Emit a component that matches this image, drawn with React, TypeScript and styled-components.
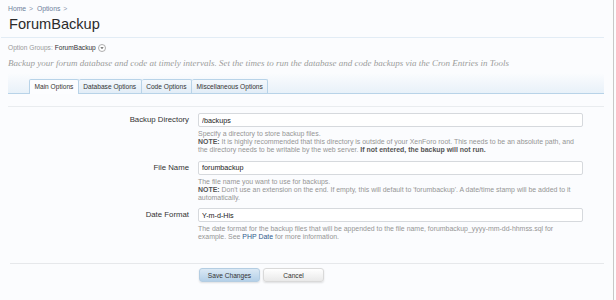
import styled, { createGlobalStyle } from "styled-components";

const GlobalStyle = createGlobalStyle`
  html, body {
    margin: 0;
    padding: 0;
    background: #fbfcfe;
  }
  body {
    font-family: "Liberation Sans", Arial, sans-serif;
    color: #333;
  }
`;

interface TabData {
  label: string;
  active?: boolean;
}

const tabs: TabData[] = [
  { label: "Main Options", active: true },
  { label: "Database Options" },
  { label: "Code Options" },
  { label: "Miscellaneous Options" },
];

function App() {
  return (
    <Page>
      <GlobalStyle />
      <Content>
        <Breadcrumb>
          <a>Home</a> <span>&gt;</span> <a>Options</a> <span>&gt;</span>
        </Breadcrumb>
        <Title>ForumBackup</Title>
        <GroupLine>
          Option Groups: <strong>ForumBackup</strong>
          <Chooser>
            <svg width="8" height="8" viewBox="0 0 8 8">
              <circle cx="4" cy="4" r="3.5" fill="#fff" stroke="#9a9a9a" strokeWidth="0.8" />
              <path d="M2.3 3.2 L5.7 3.2 L4 5.1 Z" fill="#555" />
            </svg>
          </Chooser>
        </GroupLine>
        <Description>
          Backup your forum database and code at timely intervals. Set the times to run the
          database and code backups via the Cron Entries in Tools
        </Description>
        <TabBar>
          {tabs.map((t) => (
            <Tab key={t.label} $active={t.active}>
              {t.label}
            </Tab>
          ))}
        </TabBar>

        <Form>
          <Row>
            <Label>Backup Directory</Label>
            <Field>
              <Input defaultValue="/backups" />
              <Explain>
                Specify a directory to store backup files.
                <br />
                <b>NOTE:</b> It is highly recommended that this directory is outside of your
                XenForo root. This needs to be an absolute path, and the directory needs to be
                writable by the web server. <b>If not entered, the backup will not run.</b>
              </Explain>
            </Field>
          </Row>
          <Row>
            <Label>File Name</Label>
            <Field>
              <Input defaultValue="forumbackup" />
              <Explain>
                The file name you want to use for backups.
                <br />
                <b>NOTE:</b> Don't use an extension on the end. If empty, this will default to
                'forumbackup'. A date/time stamp will be added to it automatically.
              </Explain>
            </Field>
          </Row>
          <Row>
            <Label>Date Format</Label>
            <Field>
              <Input defaultValue="Y-m-d-His" />
              <Explain>
                The date format for the backup files that will be appended to the file name,
                forumbackup_yyyy-mm-dd-hhmss.sql for example. See <PhpLink>PHP Date</PhpLink>{" "}
                for more information.
              </Explain>
            </Field>
          </Row>
        </Form>

        <SubmitUnit>
          <Button $primary>Save Changes</Button>
          <Button>Cancel</Button>
        </SubmitUnit>
      </Content>
      <Edge />
    </Page>
  );
}

const Page = styled.div`
  display: flex;
  width: 616px;
  height: 300px;
  overflow: hidden;
`;

const Content = styled.div`
  width: 604px;
  padding-left: 8px;
  box-sizing: border-box;
`;

const Edge = styled.div`
  width: 1px;
  margin-left: 9px;
  background: #c8c8c8;
`;

const Breadcrumb = styled.div`
  font-size: 6.8px;
  line-height: 8px;
  padding-top: 5px;
  color: #6d7f9c;
  a {
    color: #6d7f9c;
  }
  span {
    margin: 0 2px 0 1px;
    color: #8a97ad;
  }
`;

const Title = styled.h1`
  margin: 1px 0 0;
  font-size: 14.6px;
  line-height: 20px;
  font-weight: normal;
  color: #2b2b2b;
  padding-bottom: 3px;
  margin-left: -7px;
  padding-left: 8px;
  border-bottom: 1px solid #e2ecf5;
`;

const GroupLine = styled.div`
  display: flex;
  align-items: center;
  margin-top: 6px;
  font-size: 6.6px;
  line-height: 8px;
  color: #9a9a9a;
  strong {
    font-weight: normal;
    color: #333;
    margin-left: 2px;
  }
`;

const Chooser = styled.span`
  display: inline-flex;
  margin-left: 2px;
`;

const Description = styled.div`
  margin-top: 6px;
  font-family: "Liberation Serif", "Times New Roman", serif;
  font-style: italic;
  font-size: 9px;
  line-height: 10px;
  color: #9c9c9c;
  white-space: nowrap;
`;

const TabBar = styled.div`
  display: flex;
  align-items: flex-end;
  margin-top: 5px;
  padding-left: 21px;
  height: 21px;
  box-sizing: border-box;
  border-bottom: 1px solid #b8d3e8;
  background: linear-gradient(to bottom, rgba(235, 243, 250, 0), #e8f1f9);
`;

const Tab = styled.div<{ $active?: boolean }>`
  padding: 0 4.5px;
  box-sizing: border-box;
  font-size: 6.6px;
  line-height: 14px;
  color: #333;
  border: 1px solid #b8d3e8;
  border-left-width: ${(p) => (p.$active ? "1px" : "0")};
  border-bottom: none;
  border-radius: 2px 2px 0 0;
  margin-bottom: ${(p) => (p.$active ? "-1px" : "0")};
  height: ${(p) => (p.$active ? "15px" : "14px")};
  background: ${(p) =>
    p.$active ? "#fcfdff" : "linear-gradient(to bottom, #f4f8fc, #e2edf7)"};
  &:first-child {
    border-left-width: 1px;
  }
`;

const Form = styled.div`
  margin-top: 12px;
  border-top: 1px solid #e9ecef;
  padding-top: 6px;
`;

const Row = styled.div`
  display: grid;
  grid-template-columns: 181px 385px;
  column-gap: 9px;
  margin-bottom: 6px;
`;

const Label = styled.div`
  text-align: right;
  font-size: 7.8px;
  line-height: 14px;
  color: #333;
`;

const Field = styled.div`
  display: flex;
  flex-direction: column;
`;

const Input = styled.input`
  height: 14px;
  box-sizing: border-box;
  padding: 0 3px;
  border: 1px solid #d6d9dd;
  border-radius: 2px;
  background: #fff;
  font-family: "Liberation Sans", Arial, sans-serif;
  font-size: 7.2px;
  color: #222;
  outline: none;
`;

const Explain = styled.div`
  margin-top: 3px;
  font-size: 6.95px;
  line-height: 8.2px;
  color: #959595;
  padding-right: 3px;
  b {
    color: #555;
  }
`;

const PhpLink = styled.a`
  color: #2f5a8c;
`;

const SubmitUnit = styled.div`
  display: flex;
  gap: 3px;
  margin-top: 21px;
  margin-left: 2px;
  padding-left: 189px;
  padding-top: 4px;
  border-top: 1px solid #e6e8eb;
`;

const Button = styled.div<{ $primary?: boolean }>`
  width: 61px;
  height: 14px;
  box-sizing: border-box;
  text-align: center;
  font-size: 6.6px;
  line-height: 14px;
  color: #333;
  border-radius: 3px;
  border: 1px solid ${(p) => (p.$primary ? "#b4cde2" : "#d9d9d9")};
  background: ${(p) =>
    p.$primary
      ? "linear-gradient(to bottom, #dbe9f5, #b4d0e8)"
      : "linear-gradient(to bottom, #ffffff, #e9e9e9)"};
  box-shadow: 0 1px 2px rgba(0, 0, 0, 0.12);
`;

export default App;
